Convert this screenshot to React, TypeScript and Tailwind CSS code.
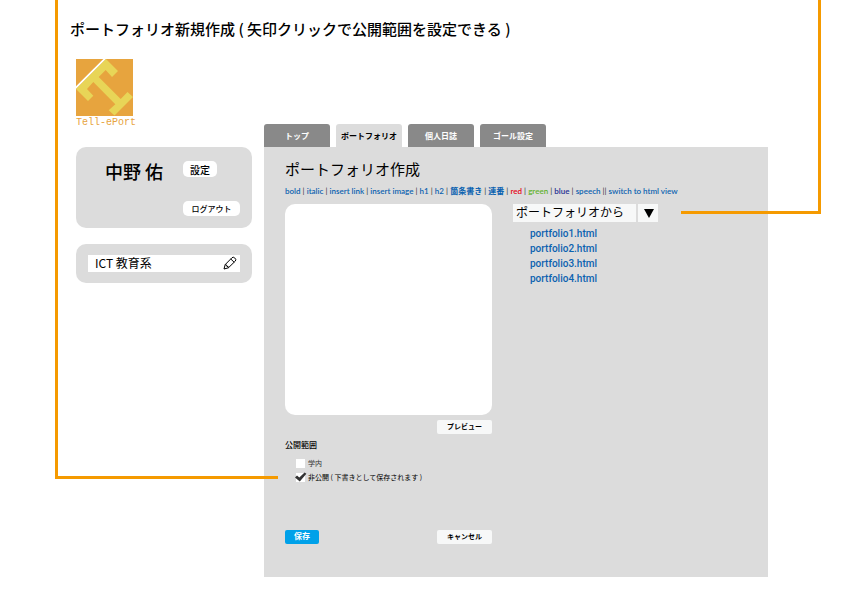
import { Fragment, useState } from 'react'

const tabs = ['トップ', 'ポートフォリオ', '個人日誌', 'ゴール設定']

const tools = [
  { label: 'bold' },
  { label: 'italic' },
  { label: 'insert link' },
  { label: 'insert image' },
  { label: 'h1' },
  { label: 'h2' },
  { label: '箇条書き', color: 'text-[#0b62b0] font-bold' },
  { label: '連番', color: 'text-[#0b62b0] font-bold' },
  { label: 'red', color: 'text-[#e60012]' },
  { label: 'green', color: 'text-[#5fb12a]' },
  { label: 'blue', color: 'text-[#1d2f93]' },
  { label: 'speech' },
  { label: 'switch to html view', divider: '||' },
]

const files = ['portfolio1.html', 'portfolio2.html', 'portfolio3.html', 'portfolio4.html']

function Logo() {
  return (
    <div className="w-[57px]">
      <svg viewBox="0 0 57 57" className="block h-[57px] w-[57px]" aria-hidden="true">
        <rect width="57" height="57" fill="#e7a43e" />
        <path d="M27.3 0H30L0 30V27.3Z" fill="#fff" />
        <path
          d="M30 0L42 12L36 18L29.7 11L22.7 18L44.7 40L51.5 33L57 38L38.5 56.5L32.7 51.3L39.3 45.3L17.3 23L11 30L17.3 36.7L12 42L0 30Z"
          fill="#e8d557"
        />
      </svg>
      <p className="font-['Liberation_Mono',monospace] text-[10px] leading-[14px] whitespace-nowrap text-[#e7a43e]">
        Tell-ePort
      </p>
    </div>
  )
}

function Pencil() {
  return (
    <svg viewBox="0 0 14 14" className="h-[14px] w-[14px]" fill="none" stroke="#000" strokeWidth="1" strokeLinejoin="round">
      <path d="M1 13L2.2 8.6L9 1.7Q10.2 .6 11.6 1.8Q13.6 3.4 12.4 5L5.4 11.8Z" />
      <path d="M7.8 3L11.2 6.3M2.2 8.6L3.6 9L3.9 10.4L5.2 10.6L5.4 11.8" />
    </svg>
  )
}

type ScopeProps = { id: string; label: string; checked: boolean; onChange: () => void; tone: string }

function Scope({ id, label, checked, onChange, tone }: ScopeProps) {
  return (
    <div className="flex h-[14px] items-center gap-[3px]">
      <span className="relative flex">
        <input
          id={id}
          type="checkbox"
          checked={checked}
          onChange={onChange}
          className="h-[9px] w-[9px] appearance-none bg-white"
        />
        {checked && (
          <svg viewBox="0 0 12 10" className="pointer-events-none absolute -top-px -left-px h-[10px] w-[12px]">
            <path d="M0 5.4L2 3.6L4.3 5.6L9.6 .4L11.4 1.8L4.8 9.4Z" fill="#333" />
          </svg>
        )}
      </span>
      <label htmlFor={id} className={`text-[7px] leading-[14px] ${tone}`}>
        {label}
      </label>
    </div>
  )
}

export default function App() {
  const [campus, setCampus] = useState(false)
  const [hidden, setHidden] = useState(true)

  return (
    <div className="relative min-h-screen bg-white pr-[75px] pb-5 pl-[76px] font-['Noto_Sans_CJK_JP',sans-serif] text-black">
      <div className="pointer-events-none absolute top-0 left-[55px] h-[479px] w-[223px] border-b-3 border-l-3 border-[#f59a00]" />
      <div className="pointer-events-none absolute top-0 right-[22px] h-[214px] w-[140px] border-r-3 border-b-3 border-[#f59a00]" />

      <h1 className="-ml-[6px] pt-[18px] text-[15px] leading-[22px] font-medium">
        ポートフォリオ新規作成 ( 矢印クリックで公開範囲を設定できる )
      </h1>

      <div className="flex gap-3 pt-[19px]">
        <aside className="flex w-[176px] shrink-0 flex-col">
          <Logo />
          <section className="mt-[17px] flex h-[81px] justify-between rounded-[10px] bg-[#dcdcdc] pt-[13px] pr-3 pl-[29px]">
            <p className="text-[18px] leading-[22px] font-medium">中野 佑</p>
            <div className="flex w-[57px] flex-col items-start gap-6 pt-px">
              <button className="h-4 w-[34px] rounded-[5px] bg-white text-[10px] leading-[15px] font-medium">設定</button>
              <button className="h-[15px] w-full rounded-[5px] bg-white text-[8px] leading-[14px] font-medium">
                ログアウト
              </button>
            </div>
          </section>
          <section className="mt-4 rounded-[10px] bg-[#dcdcdc] px-3 py-[11px]">
            <div className="flex h-[17px] items-start bg-white pr-[3px] pl-[7px]">
              <input
                aria-label="所属"
                defaultValue="ICT 教育系"
                className="h-[15px] min-w-0 flex-1 bg-transparent text-[12px] outline-none"
              />
              <button aria-label="編集" className="pt-px">
                <Pencil />
              </button>
            </div>
          </section>
        </aside>

        <main className="min-w-0 flex-1 pt-[65px]">
          <nav className="flex gap-[6px]">
            {tabs.map((tab, i) => (
              <a
                key={tab}
                href="#"
                className={`h-[23px] w-[66px] rounded-t-[3px] text-center text-[8px] leading-[23px] font-bold ${
                  i === 1 ? 'bg-[#dcdcdc] text-black' : 'bg-[#898989] text-white'
                }`}
              >
                {tab}
              </a>
            ))}
          </nav>

          <div className="bg-[#dcdcdc] px-[21px] pt-[11px] pb-[33px]">
            <h2 className="text-[15px] leading-[22px]">ポートフォリオ作成</h2>

            <div className="mt-[5px] font-['Lato','Noto_Sans_CJK_JP',sans-serif] text-[8px] leading-3 font-semibold whitespace-nowrap text-[#0b62b0]">
              {tools.map((tool, i) => (
                <Fragment key={tool.label}>
                  {i > 0 && <span className="font-normal text-[#333]"> {tool.divider ?? '|'} </span>}
                  <button className={tool.color}>{tool.label}</button>
                </Fragment>
              ))}
            </div>

            <div className="mt-[7px] flex gap-[21px]">
              <form className="flex w-[207px] shrink-0 flex-col">
                <textarea aria-label="本文" className="h-[211px] resize-none rounded-[10px] bg-white p-2 text-[10px] outline-none" />
                <button
                  type="button"
                  className="mt-[5px] h-[14px] w-[55px] self-end rounded-[2px] bg-[#f7f8f8] pb-[2px] text-[7px] leading-3 font-bold"
                >
                  プレビュー
                </button>
                <fieldset className="mt-[5px]">
                  <legend className="text-[8px] leading-3 font-medium">公開範囲</legend>
                  <div className="mt-[5px] pl-[11px]">
                    <Scope id="campus" label="学内" checked={campus} onChange={() => setCampus(!campus)} tone="text-[#333]" />
                    <Scope
                      id="private"
                      label="非公開 ( 下書きとして保存されます )"
                      checked={hidden}
                      onChange={() => setHidden(!hidden)}
                      tone="text-black"
                    />
                  </div>
                </fieldset>
                <div className="mt-[46px] flex justify-between">
                  <button
                    type="button"
                    className="h-[14px] w-[34px] rounded-[2px] bg-[#00a1e9] pb-[2px] text-[8px] leading-3 font-bold text-white"
                  >
                    保存
                  </button>
                  <button
                    type="button"
                    className="h-[14px] w-[55px] rounded-[2px] bg-[#f7f8f8] pb-[2px] text-[7px] leading-3 font-bold"
                  >
                    キャンセル
                  </button>
                </div>
              </form>

              <div className="min-w-0 flex-1">
                <div className="relative flex h-[18px] w-[145px]">
                  <select
                    aria-label="参照元"
                    className="w-full appearance-none bg-[#f7f8f8] pb-[2px] pl-[3px] text-[12px] leading-4 outline-none"
                  >
                    <option>ポートフォリオから</option>
                  </select>
                  <span className="pointer-events-none absolute inset-y-0 right-0 flex w-[22px] items-center justify-center border-l-2 border-[#dcdcdc] pl-px">
                    <svg viewBox="0 0 10 9" className="h-[9px] w-[10px]">
                      <path d="M0 0H10L5 9Z" />
                    </svg>
                  </span>
                </div>
                <ul className="mt-1 pl-[17px] font-['Roboto',sans-serif] text-[10px] leading-[15px] font-medium text-[#0b62b0]">
                  {files.map((file) => (
                    <li key={file}>
                      <a href="#">{file}</a>
                    </li>
                  ))}
                </ul>
              </div>
            </div>
          </div>
        </main>
      </div>
    </div>
  )
}
